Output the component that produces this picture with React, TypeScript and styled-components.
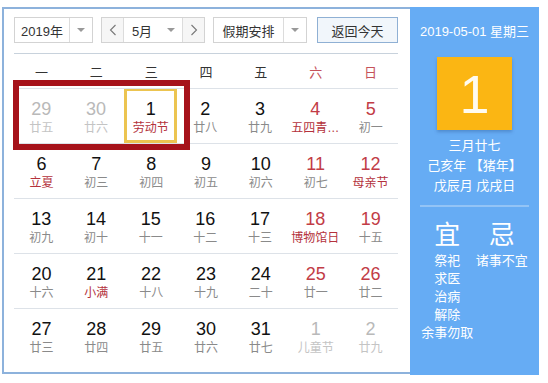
import React from 'react'
import styled, { createGlobalStyle } from 'styled-components'

const GlobalStyle = createGlobalStyle`
  body {
    margin: 0;
    background: #fff;
    font-family: 'Liberation Sans', 'Noto Sans CJK SC', sans-serif;
  }
`

type Tone = 'normal' | 'weekend' | 'other'

interface Day {
  num: number
  lunar: string
  tone: Tone
  festival?: boolean
  selected?: boolean
}

const WEEKDAYS = ['一', '二', '三', '四', '五', '六', '日']

const d = (num: number, lunar: string, tone: Tone = 'normal', festival = false): Day => ({
  num,
  lunar,
  tone,
  festival,
})

const WEEKS: Day[][] = [
  [
    d(29, '廿五', 'other'),
    d(30, '廿六', 'other'),
    { num: 1, lunar: '劳动节', tone: 'normal', festival: true, selected: true },
    d(2, '廿八'),
    d(3, '廿九'),
    d(4, '五四青…', 'weekend', true),
    d(5, '初一', 'weekend'),
  ],
  [
    d(6, '立夏', 'normal', true),
    d(7, '初三'),
    d(8, '初四'),
    d(9, '初五'),
    d(10, '初六'),
    d(11, '初七', 'weekend'),
    d(12, '母亲节', 'weekend', true),
  ],
  [
    d(13, '初九'),
    d(14, '初十'),
    d(15, '十一'),
    d(16, '十二'),
    d(17, '十三'),
    d(18, '博物馆日', 'weekend', true),
    d(19, '十五', 'weekend'),
  ],
  [
    d(20, '十六'),
    d(21, '小满', 'normal', true),
    d(22, '十八'),
    d(23, '十九'),
    d(24, '二十'),
    d(25, '廿一', 'weekend'),
    d(26, '廿二', 'weekend'),
  ],
  [
    d(27, '廿三'),
    d(28, '廿四'),
    d(29, '廿五'),
    d(30, '廿六'),
    d(31, '廿七'),
    d(1, '儿童节', 'other'),
    d(2, '廿九', 'other'),
  ],
]

const Caret = () => <CaretShape />

const Chevron = ({ dir }: { dir: 'left' | 'right' }) => (
  <svg width="8" height="12" viewBox="0 0 8 12">
    <polyline
      points={dir === 'left' ? '6.5,1 1.5,6 6.5,11' : '1.5,1 6.5,6 1.5,11'}
      fill="none"
      stroke="#777"
      strokeWidth="1.1"
    />
  </svg>
)

const App = () => {
  return (
    <>
      <GlobalStyle />
      <Frame>
        <CalendarPane>
          <Toolbar>
            <Select width={79}>
              <SelectLabel>2019年</SelectLabel>
              <CaretBox>
                <Caret />
              </CaretBox>
            </Select>
            <Select width={104}>
              <NavButton>
                <Chevron dir="left" />
              </NavButton>
              <SelectLabel>5月</SelectLabel>
              <CaretBox plain>
                <Caret />
              </CaretBox>
              <NavButton right>
                <Chevron dir="right" />
              </NavButton>
            </Select>
            <Select width={94}>
              <SelectLabel>假期安排</SelectLabel>
              <CaretBox>
                <Caret />
              </CaretBox>
            </Select>
            <TodayButton>返回今天</TodayButton>
          </Toolbar>
          <Divider />
          <WeekHeader>
            {WEEKDAYS.map((w, i) => (
              <WeekName key={w} weekend={i >= 5}>
                {w}
              </WeekName>
            ))}
          </WeekHeader>
          {WEEKS.map((week, wi) => (
            <WeekRow key={wi}>
              {week.map((day, di) => (
                <Cell key={di} selected={day.selected}>
                  <DayNum tone={day.tone}>{day.num}</DayNum>
                  <Lunar tone={day.tone} festival={day.festival}>
                    {day.lunar}
                  </Lunar>
                </Cell>
              ))}
            </WeekRow>
          ))}
        </CalendarPane>
        <SidePanel>
          <SideDate>2019-05-01 星期三</SideDate>
          <BigDay>1</BigDay>
          <LunarLines>
            <div>三月廿七</div>
            <div>己亥年 【猪年】</div>
            <div>戊辰月 戊戌日</div>
          </LunarLines>
          <PanelRule />
          <Almanac>
            <AlmanacCol>
              <AlmanacHead>宜</AlmanacHead>
              <AlmanacItem>祭祀</AlmanacItem>
              <AlmanacItem>求医</AlmanacItem>
              <AlmanacItem>治病</AlmanacItem>
              <AlmanacItem>解除</AlmanacItem>
              <AlmanacItem>余事勿取</AlmanacItem>
            </AlmanacCol>
            <AlmanacCol>
              <AlmanacHead>忌</AlmanacHead>
              <AlmanacItem>诸事不宜</AlmanacItem>
            </AlmanacCol>
          </Almanac>
        </SidePanel>
        <Highlight />
      </Frame>
    </>
  )
}

export default App

const Frame = styled.div`
  position: relative;
  display: flex;
  align-items: flex-start;
  width: 537px;
  margin: 7px 0 0 2px;
`

const CalendarPane = styled.div`
  box-sizing: border-box;
  width: 408px;
  height: 367px;
  padding: 8px 12px 0 10px;
  border: 2px solid #8db2dc;
  border-right: none;
`

const Toolbar = styled.div`
  display: flex;
  align-items: center;
  height: 26px;
  gap: 8px;
`

const Select = styled.div<{ width: number }>`
  box-sizing: border-box;
  display: flex;
  align-items: stretch;
  width: ${(p) => p.width}px;
  height: 26px;
  border: 1px solid #d3d3d3;
  background: #fff;
`

const SelectLabel = styled.div`
  flex: 1;
  display: flex;
  align-items: center;
  justify-content: center;
  font-size: 13px;
  color: #333;
`

const CaretBox = styled.div<{ plain?: boolean }>`
  width: 22px;
  display: flex;
  align-items: center;
  justify-content: center;
  border-left: ${(p) => (p.plain ? 'none' : '1px solid #dcdcdc')};
`

const CaretShape = styled.span`
  width: 0;
  height: 0;
  border-left: 4px solid transparent;
  border-right: 4px solid transparent;
  border-top: 4px solid #999;
`

const NavButton = styled.div<{ right?: boolean }>`
  width: 21px;
  display: flex;
  align-items: center;
  justify-content: center;
  background: #f6f6f6;
  border-right: ${(p) => (p.right ? 'none' : '1px solid #dcdcdc')};
  border-left: ${(p) => (p.right ? '1px solid #dcdcdc' : 'none')};
`

const TodayButton = styled.div`
  box-sizing: border-box;
  margin-left: 2px;
  width: 81px;
  height: 26px;
  display: flex;
  align-items: center;
  justify-content: center;
  font-size: 13px;
  color: #333;
  background: #f1f6fb;
  border: 1px solid #8fb0d4;
`

const Divider = styled.div`
  height: 1px;
  margin-top: 10px;
  background: #c8d2dc;
`

const WeekHeader = styled.div`
  display: grid;
  grid-template-columns: repeat(7, 1fr);
  height: 34px;
  align-items: center;
`

const WeekName = styled.div<{ weekend?: boolean }>`
  text-align: center;
  font-size: 13px;
  color: ${(p) => (p.weekend ? '#c5525a' : '#333')};
`

const WeekRow = styled.div`
  display: grid;
  grid-template-columns: repeat(7, 1fr);
  height: 55px;
  border-top: 1px solid #dde2e8;
  box-sizing: border-box;
`

const Cell = styled.div<{ selected?: boolean }>`
  display: flex;
  flex-direction: column;
  align-items: center;
  padding-top: 10px;
  box-sizing: border-box;
  margin: 0 1px;
  border: 3px solid ${(p) => (p.selected ? '#ecc450' : 'transparent')};
  border-top-width: ${(p) => (p.selected ? '2px' : '0')};
  padding-top: ${(p) => (p.selected ? '8px' : '10px')};
`

const numColor = (t: Tone) => (t === 'other' ? '#b9b9b9' : t === 'weekend' ? '#c23c46' : '#111')

const DayNum = styled.div<{ tone: Tone }>`
  font-size: 18px;
  line-height: 20px;
  color: ${(p) => numColor(p.tone)};
`

const Lunar = styled.div<{ tone: Tone; festival?: boolean }>`
  margin-top: 1px;
  font-size: 12px;
  line-height: 17px;
  white-space: nowrap;
  color: ${(p) => (p.tone === 'other' ? '#c4c4c4' : p.festival ? '#b4323c' : '#8a8a8a')};
`

const SidePanel = styled.div`
  box-sizing: border-box;
  width: 129px;
  height: 368px;
  padding: 17px 10px 0;
  background: #66acf4;
  color: #fff;
  display: flex;
  flex-direction: column;
  align-items: center;
`

const SideDate = styled.div`
  font-size: 13px;
  line-height: 16px;
  white-space: nowrap;
`

const BigDay = styled.div`
  margin-top: 17px;
  width: 75px;
  height: 73px;
  display: flex;
  align-items: center;
  justify-content: center;
  background: #fbb613;
  box-shadow: 0 2px 3px rgba(40, 80, 140, 0.35);
  font-size: 54px;
  color: #fffbef;
`

const LunarLines = styled.div`
  margin-top: 6px;
  font-size: 13px;
  line-height: 20px;
  text-align: center;
  white-space: nowrap;
`

const PanelRule = styled.div`
  align-self: stretch;
  height: 2px;
  margin-top: 9px;
  background: #93c4f6;
`

const Almanac = styled.div`
  align-self: stretch;
  display: grid;
  grid-template-columns: 1fr 1fr;
  margin-top: 13px;
`

const AlmanacCol = styled.div`
  display: flex;
  flex-direction: column;
  align-items: center;
`

const AlmanacHead = styled.div`
  font-size: 26px;
  line-height: 30px;
  margin-bottom: 2px;
`

const AlmanacItem = styled.div`
  font-size: 13px;
  line-height: 18px;
  white-space: nowrap;
`

const Highlight = styled.div`
  position: absolute;
  left: 11px;
  top: 73px;
  width: 177px;
  height: 70px;
  box-sizing: border-box;
  border: 6px solid #a6121a;
  pointer-events: none;
`
